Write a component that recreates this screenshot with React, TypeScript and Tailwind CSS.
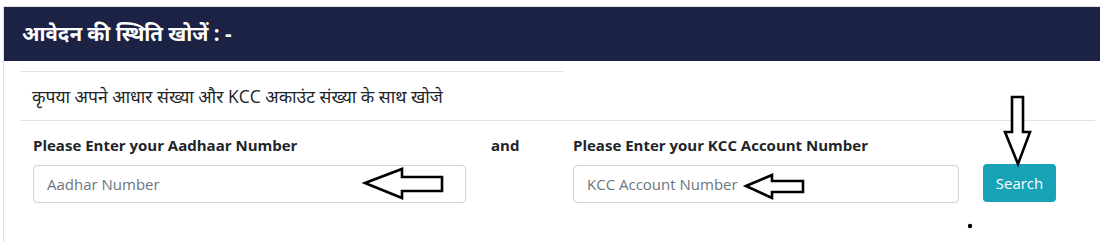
import React from "react";

const font = { fontFamily: '"Open Sans", "Noto Sans", "Noto Sans Devanagari", sans-serif' };

function Annotations() {
  return (
    <svg
      className="pointer-events-none absolute left-0 top-0"
      width="1100"
      height="242"
      viewBox="0 0 1100 242"
    >
      <g fill="white" stroke="black" strokeWidth="2.6" strokeLinejoin="miter">
        <polygon points="365,183 402,169 402,177 442,177 442,191 402,191 402,198" />
        <polygon points="746,186 772,175 772,181 803,181 803,192 772,192 772,198" />
        <polygon points="1012,97 1023,97 1023,132 1030,132 1018,164 1005,132 1012,132" />
      </g>
      <circle cx="970" cy="226" r="2.2" fill="black" />
    </svg>
  );
}

export default function App() {
  return (
    <div className="relative h-[242px] w-[1100px] overflow-hidden bg-white pl-[3px] pt-[6px]" style={font}>
      <div className="w-[1110px] border border-[#dee2e6] bg-white">
        <div className="flex h-[54px] items-center bg-[#1b2243] px-[18px] pb-[2px] text-[20.5px] font-bold text-white">
          आवेदन की स्थिति खोजें : -
        </div>

        <div className="ml-[16px] mt-[10px] w-[544px] border-t border-[#dee2e6]" />
        <div className="flex h-[48px] items-center pl-[28px] text-[17.5px] text-[#212529]">
          कृपया अपने आधार संख्या और KCC अकाउंट संख्या के साथ खोजे
        </div>
        <div className="ml-[16px] w-[1075px] border-t border-[#dee2e6]" />

        <div className="mt-[14px] flex items-end pb-[60px]">
          <div className="ml-[29px] w-[433px]">
            <div className="mb-[9px] text-[15px] font-bold leading-[21px] text-[#212529]">
              Please Enter your Aadhaar Number
            </div>
            <input
              className="h-[38px] w-full rounded-[4px] border border-[#ced4da] px-[13px] text-[15px] text-[#495057] outline-none placeholder:text-[#6c757d]"
              placeholder="Aadhar Number"
            />
          </div>

          <div className="mb-[47px] ml-[25px] w-[82px] text-[15px] font-bold leading-[21px] text-[#212529]">
            and
          </div>

          <div className="w-[386px]">
            <div className="mb-[9px] text-[15px] font-bold leading-[21px] text-[#212529]">
              Please Enter your KCC Account Number
            </div>
            <input
              className="h-[38px] w-full rounded-[4px] border border-[#ced4da] px-[13px] text-[15px] text-[#495057] outline-none placeholder:text-[#6c757d]"
              placeholder="KCC Account Number"
            />
          </div>

          <button className="mb-[1px] ml-[24px] h-[38px] w-[73px] rounded-[4px] bg-[#17a2b8] text-[15px] text-white">
            Search
          </button>
        </div>
      </div>
      <Annotations />
    </div>
  );
}
